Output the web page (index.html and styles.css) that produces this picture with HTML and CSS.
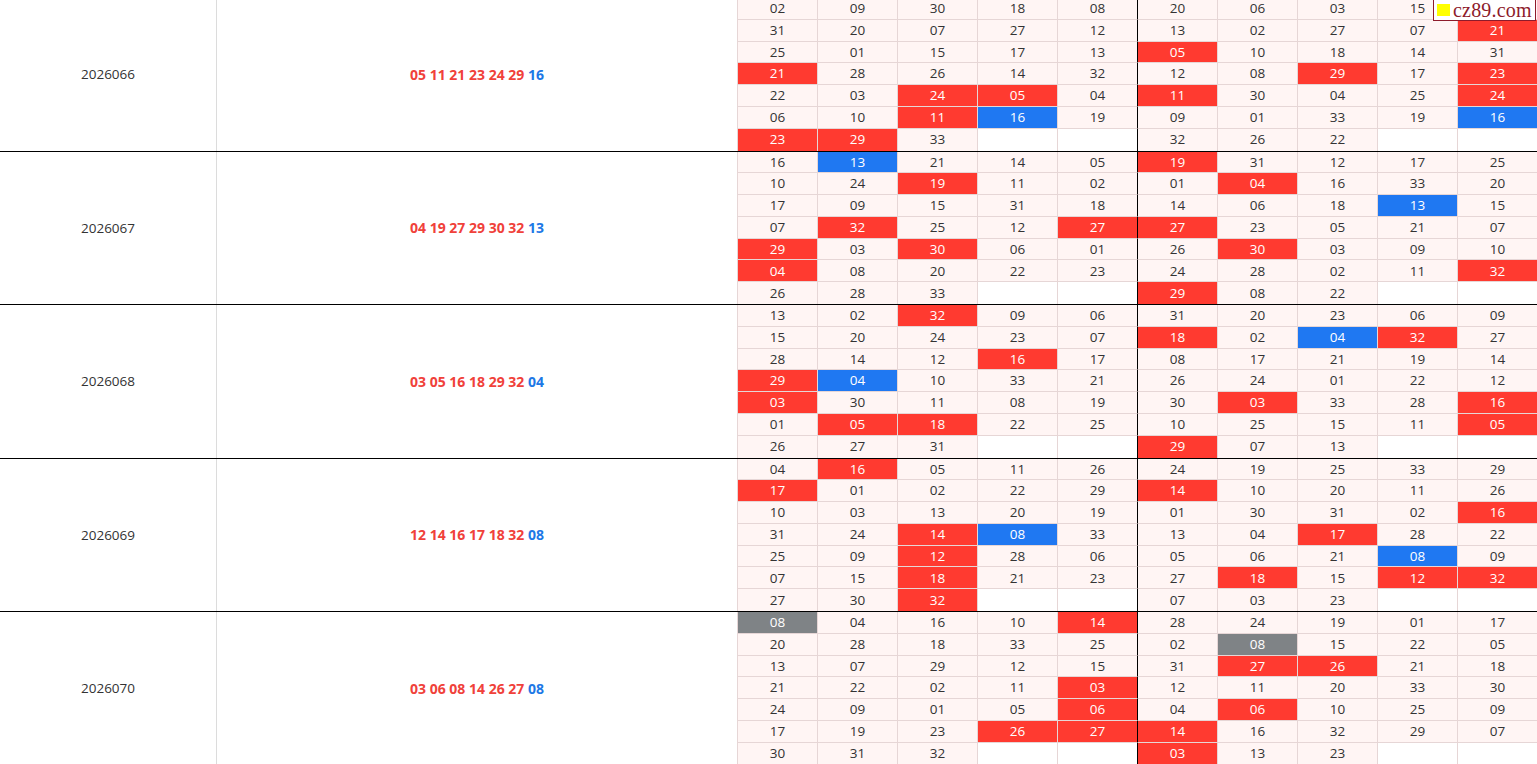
FILE: index.html
```html
<!DOCTYPE html>
<html lang="zh-CN">
<head>
<meta charset="utf-8">
<title>开奖走势</title>
<link rel="stylesheet" href="styles.css">
</head>
<body>
<div class="sheet" id="sheet"></div>
<div class="logo"><span class="logo-sq"></span><span class="logo-txt">cz89.com</span></div>
<script src="app.js"></script>
</body>
</html>
```

FILE: app.js
```js
var periods = [
  { id: "2026066", red: "05 11 21 23 24 29", blue: "16", rows: [
    "02 09 30 18 08 20 06 03 15 28",
    "31 20 07 27 12 13 02 27 07 21r",
    "25 01 15 17 13 05r 10 18 14 31",
    "21r 28 26 14 32 12 08 29r 17 23r",
    "22 03 24r 05r 04 11r 30 04 25 24r",
    "06 10 11r 16b 19 09 01 33 19 16b",
    "23r 29r 33 _ _ 32 26 22 _ _"
  ]},
  { id: "2026067", red: "04 19 27 29 30 32", blue: "13", rows: [
    "16 13b 21 14 05 19r 31 12 17 25",
    "10 24 19r 11 02 01 04r 16 33 20",
    "17 09 15 31 18 14 06 18 13b 15",
    "07 32r 25 12 27r 27r 23 05 21 07",
    "29r 03 30r 06 01 26 30r 03 09 10",
    "04r 08 20 22 23 24 28 02 11 32r",
    "26 28 33 _ _ 29r 08 22 _ _"
  ]},
  { id: "2026068", red: "03 05 16 18 29 32", blue: "04", rows: [
    "13 02 32r 09 06 31 20 23 06 09",
    "15 20 24 23 07 18r 02 04b 32r 27",
    "28 14 12 16r 17 08 17 21 19 14",
    "29r 04b 10 33 21 26 24 01 22 12",
    "03r 30 11 08 19 30 03r 33 28 16r",
    "01 05r 18r 22 25 10 25 15 11 05r",
    "26 27 31 _ _ 29r 07 13 _ _"
  ]},
  { id: "2026069", red: "12 14 16 17 18 32", blue: "08", rows: [
    "04 16r 05 11 26 24 19 25 33 29",
    "17r 01 02 22 29 14r 10 20 11 26",
    "10 03 13 20 19 01 30 31 02 16r",
    "31 24 14r 08b 33 13 04 17r 28 22",
    "25 09 12r 28 06 05 06 21 08b 09",
    "07 15 18r 21 23 27 18r 15 12r 32r",
    "27 30 32r _ _ 07 03 23 _ _"
  ]},
  { id: "2026070", red: "03 06 08 14 26 27", blue: "08", rows: [
    "08g 04 16 10 14r 28 24 19 01 17",
    "20 28 18 33 25 02 08g 15 22 05",
    "13 07 29 12 15 31 27r 26r 21 18",
    "21 22 02 11 03r 12 11 20 33 30",
    "24 09 01 05 06r 04 06r 10 25 09",
    "17 19 23 26r 27r 14r 16 32 29 07",
    "30 31 32 _ _ 03r 13 23 _ _"
  ]}
];

var sheet = document.getElementById("sheet");
periods.forEach(function (p) {
  var row = document.createElement("div");
  row.className = "period";
  var pid = document.createElement("div");
  pid.className = "p-id";
  pid.textContent = p.id;
  var nums = document.createElement("div");
  nums.className = "p-nums";
  var wrap = document.createElement("span");
  wrap.className = "n-wrap";
  var r = document.createElement("span");
  r.className = "n-red";
  r.textContent = p.red + " ";
  var b = document.createElement("span");
  b.className = "n-blue";
  b.textContent = p.blue;
  wrap.appendChild(r);
  wrap.appendChild(b);
  nums.appendChild(wrap);
  var grid = document.createElement("div");
  grid.className = "grid";
  p.rows.forEach(function (line, ri) {
    line.split(" ").forEach(function (tok, ci) {
      var c = document.createElement("div");
      c.className = "cell";
      if (ci === 5) c.className += " split";
      if (ri === 6) c.className += " last";
      if (tok === "_") {
        c.className += " empty";
      } else {
        var k = tok.charAt(2);
        if (k === "r") c.className += " hit-red";
        else if (k === "b") c.className += " hit-blue";
        else if (k === "g") c.className += " hit-grey";
        c.textContent = tok.substr(0, 2);
      }
      grid.appendChild(c);
    });
  });
  row.appendChild(pid);
  row.appendChild(nums);
  row.appendChild(grid);
  sheet.appendChild(row);
});
```

FILE: styles.css
```css
html, body {
  margin: 0;
  padding: 0;
  background: #ffffff;
  overflow: hidden;
}

body {
  font-family: "Open Sans", "Noto Sans CJK SC", sans-serif;
  color: #333333;
  width: 1537px;
  height: 764px;
  position: relative;
}

.sheet {
  margin-top: -2px;
  width: 1540px;
}

.period {
  display: flex;
  height: 153.5px;
  box-sizing: border-box;
  border-bottom: 1px solid #000000;
}

.p-id {
  width: 216px;
  flex: 0 0 216px;
  border-right: 1px solid #dcdcdc;
  display: flex;
  align-items: center;
  justify-content: center;
  font-size: 13.5px;
  color: #333333;
}

.p-nums {
  width: 520px;
  flex: 0 0 520px;
  display: flex;
  align-items: center;
  justify-content: center;
  font-size: 14px;
  font-weight: 700;
}

.n-wrap {
  white-space: pre;
}

.n-red {
  color: #f0413a;
}

.n-blue {
  color: #1d78e6;
}

.grid {
  flex: 0 0 800px;
  display: grid;
  grid-template-columns: repeat(10, 80px);
  grid-template-rows: repeat(7, 1fr);
}

.cell {
  box-sizing: border-box;
  border-left: 1px solid #e6d6d6;
  border-bottom: 1px solid #e6d6d6;
  background: #fff5f4;
  display: flex;
  align-items: center;
  justify-content: center;
  font-size: 13.5px;
  color: #333333;
  line-height: 1;
  padding-top: 1px;
}

.cell.split {
  border-left-color: #000000;
}

.cell.last {
  border-bottom: none;
}

.cell.empty {
  background: #ffffff;
}

.cell.hit-red {
  background: #ff3a30;
  color: #ffffff;
}

.cell.hit-blue {
  background: #1f78f2;
  color: #ffffff;
}

.cell.hit-grey {
  background: #7f8386;
  color: #ffffff;
}

.logo {
  position: absolute;
  top: -1px;
  left: 1433px;
  width: 103px;
  height: 22px;
  box-sizing: border-box;
  border: 1px solid #8e1b2b;
  background: #ffffff;
  display: flex;
  align-items: center;
  padding-left: 3px;
  gap: 3px;
  overflow: hidden;
}

.logo-sq {
  width: 13px;
  height: 12px;
  background: #ffff00;
  flex: 0 0 13px;
}

.logo-txt {
  font-family: "Liberation Serif", serif;
  font-size: 20px;
  color: #8e1b2b;
  letter-spacing: 0.2px;
  line-height: 1;
  white-space: nowrap;
}
```
